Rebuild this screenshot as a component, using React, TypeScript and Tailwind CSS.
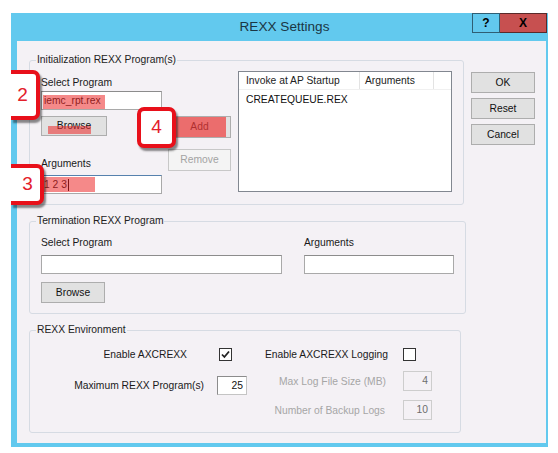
import type { ReactNode } from "react";

const font = "font-['Liberation_Sans',Arial,sans-serif]";

function Button({ label, className = "", children }: { label: string; className?: string; children?: ReactNode }) {
	return (
		<div
			className={`relative flex items-center justify-center bg-[#e1e1e1] border border-[#adadad] text-[10.3px] text-[#111] ${className}`}
		>
			{label}
			{children}
		</div>
	);
}

function TextBox({ value = "", className = "", children }: { value?: string; className?: string; children?: ReactNode }) {
	return (
		<div
			className={`relative flex items-center bg-white border border-[#a9a9a9] border-t-[#8c8c8c] text-[10.3px] text-[#111] px-[2px] ${className}`}
		>
			{value}
			{children}
		</div>
	);
}

function Group({ title, className = "", children }: { title: string; className?: string; children: ReactNode }) {
	return (
		<fieldset className={`border border-[#d6dbe3] rounded-[3px] ${className}`}>
			<legend className="ml-[6px] px-[1px] text-[10.3px] leading-[12px] text-[#222]">{title}</legend>
			{children}
		</fieldset>
	);
}

function Label({ text, className = "" }: { text: string; className?: string }) {
	return <div className={`text-[10.3px] leading-[11px] text-[#1a1a1a] whitespace-nowrap ${className}`}>{text}</div>;
}

function CheckBox({ checked }: { checked?: boolean }) {
	return (
		<div className="w-[13px] h-[13px] bg-white border border-[#333] flex items-center justify-center">
			{checked && (
				<svg width="9" height="9" viewBox="0 0 9 9">
					<path d="M1 4.5 L3.4 7 L8 1.5" fill="none" stroke="#222" strokeWidth="1.8" />
				</svg>
			)}
		</div>
	);
}

function Callout({ n, className }: { n: string; className: string }) {
	return (
		<div
			className={`absolute bg-white border-[4px] border-[#e8101a] flex items-center justify-center shadow-[2px_3px_2px_rgba(0,0,0,0.45)] text-[19px] text-[#e3202a] ${className}`}
		>
			{n}
		</div>
	);
}

const mark = "absolute bg-[rgba(236,40,40,0.55)]";

export default function App() {
	return (
		<div className={`relative w-[558px] h-[453px] bg-white overflow-hidden pl-[11px] pt-[13px] ${font}`}>
			<div className="w-[537px] h-[434px] bg-[#62c9ee] flex flex-col">
				{/* title bar */}
				<div className="h-[28px] grid grid-cols-[76px_1fr_76px]">
					<div />
					<div className="flex items-center justify-center pl-[10px] text-[13.6px] text-[#1b3644]">REXX Settings</div>
					<div className="flex items-start">
						<div className="w-[28px] h-[20px] border border-[#2f5f74] flex items-center justify-center text-[12px] font-bold text-black">
							?
						</div>
						<div className="w-[47px] h-[20px] bg-[#c75050] border border-[#5a2a2a] border-l-0 flex items-center justify-center text-[12px] font-bold text-black">
							X
						</div>
					</div>
				</div>

				{/* client area */}
				<div className="ml-[6px] mr-[2px] mb-[4px] flex-1 bg-[#f4f1f5] flex pl-[12px] pt-[13px]">
					<div className="w-[432px] flex flex-col gap-[10px]">
						<Group title="Initialization REXX Program(s)" className="h-[151px]">
							<div className="flex items-start px-[11px]">
								<div className="w-[121px] mt-[11px] flex flex-col">
									<Label text="Select Program" />
									<TextBox className="mt-[3px] h-[19px]" value="iemc_rpt.rex">
										<div className={`${mark} left-[1px] top-[3px] w-[62px] h-[14px]`} />
									</TextBox>
									<Button label="Browse" className="mt-[6px] w-[66px] h-[20px]">
										<div className={`${mark} left-[6px] top-[9px] w-[43px] h-[8px]`} />
									</Button>
									<Label text="Arguments" className="mt-[22px]" />
									<TextBox className="mt-[6px] h-[19px] border-[#5681ad] border-t-[#5681ad]" value="1 2 3">
										<span className="ml-[1px] w-[1px] h-[12px] bg-black" />
										<div className={`${mark} left-[1px] top-[1px] w-[52px] h-[15px]`} />
									</TextBox>
								</div>
								<div className="w-[63px] ml-[6px] mt-[50px] flex flex-col">
									<Button label="Add" className="h-[22px]">
										<div className="absolute left-[4px] top-0 w-[53px] h-full bg-[rgba(240,60,60,0.7)]" />
									</Button>
									<div className="mt-[11px] h-[22px] bg-[#f4f4f4] border border-[#c8c8c8] flex items-center justify-center text-[10.3px] text-[#a3a3a3]">
										Remove
									</div>
								</div>
								<div className="ml-[7px] mt-[5px] w-[214px] h-[121px] bg-white border border-[#828790] flex flex-col">
									<div className="h-[18px] flex text-[10.3px] text-[#222] border-b border-[#f0f0f0]">
										<div className="w-[121px] border-r border-[#e3e3e3] pl-[7px] flex items-center">Invoke at AP Startup</div>
										<div className="w-[74px] border-r border-[#e3e3e3] pl-[5px] flex items-center">Arguments</div>
									</div>
									<div className="pl-[7px] h-[20px] flex items-center text-[10.3px] text-[#111]">CREATEQUEUE.REX</div>
								</div>
							</div>
						</Group>

						<Group title="Termination REXX Program" className="h-[99px]">
							<div className="flex items-start px-[11px]">
								<div className="w-[241px] mt-[10px] flex flex-col">
									<Label text="Select Program" />
									<TextBox className="mt-[7px] h-[19px]" />
									<Button label="Browse" className="mt-[8px] w-[64px] h-[21px]" />
								</div>
								<div className="w-[150px] ml-[22px] mt-[10px] flex flex-col">
									<Label text="Arguments" />
									<TextBox className="mt-[7px] h-[19px]" />
								</div>
							</div>
						</Group>

						<Group title="REXX Environment" className="h-[109px]">
							<div className="flex items-start px-[11px]">
								<div className="w-[206px] flex flex-col items-end">
									<div className="mt-[12px] h-[13px] flex items-center pr-[15px]">
										<Label text="Enable AXCREXX" />
										<div className="ml-[32px]">
											<CheckBox checked />
										</div>
									</div>
									<div className="mt-[15px] h-[19px] flex items-center">
										<Label text="Maximum REXX Program(s)" />
										<div className="ml-[13px] w-[30px] h-[19px] bg-white border border-[#8c8c8c] border-r-[#c4c4c4] border-b-[#c4c4c4] flex items-center justify-end pr-[3px] text-[10.3px] text-[#111]">
											25
										</div>
									</div>
								</div>
								<div className="w-[171px] ml-[14px] flex flex-col items-end">
									<div className="mt-[12px] h-[13px] flex items-center pr-[16px]">
										<Label text="Enable AXCREXX Logging" />
										<div className="ml-[15px]">
											<CheckBox />
										</div>
									</div>
									<div className="mt-[10px] h-[20px] flex items-center">
										<Label text="Max Log File Size (MB)" className="text-[#a6a6a6]" />
										<div className="ml-[17px] w-[29px] h-[20px] border border-[#cdcdcd] flex items-center justify-end pr-[3px] text-[10.3px] text-[#6d6d6d]">
											4
										</div>
									</div>
									<div className="mt-[9px] h-[20px] flex items-center">
										<Label text="Number of Backup Logs" className="text-[#a6a6a6]" />
										<div className="ml-[18px] w-[29px] h-[20px] border border-[#cdcdcd] flex items-center justify-end pr-[3px] text-[10.3px] text-[#6d6d6d]">
											10
										</div>
									</div>
								</div>
							</div>
						</Group>
					</div>

					<div className="ml-[10px] mt-[18px] w-[64px] flex flex-col gap-[5px]">
						<Button label="OK" className="h-[21px] bg-[#dde3e9] border-[#3c7fb1]" />
						<Button label="Reset" className="h-[21px]" />
						<Button label="Cancel" className="h-[21px]" />
					</div>
				</div>
			</div>

			<Callout n="2" className="left-[11px] top-[70px] w-[29px] h-[50px] border-l-0 rounded-r-[7px] pr-[2px]" />
			<Callout n="3" className="left-[11px] top-[164px] w-[33px] h-[41px] border-l-0 rounded-r-[7px] pl-[4px]" />
			<Callout n="4" className="left-[137px] top-[107px] w-[39px] h-[41px] rounded-[7px]" />
		</div>
	);
}
